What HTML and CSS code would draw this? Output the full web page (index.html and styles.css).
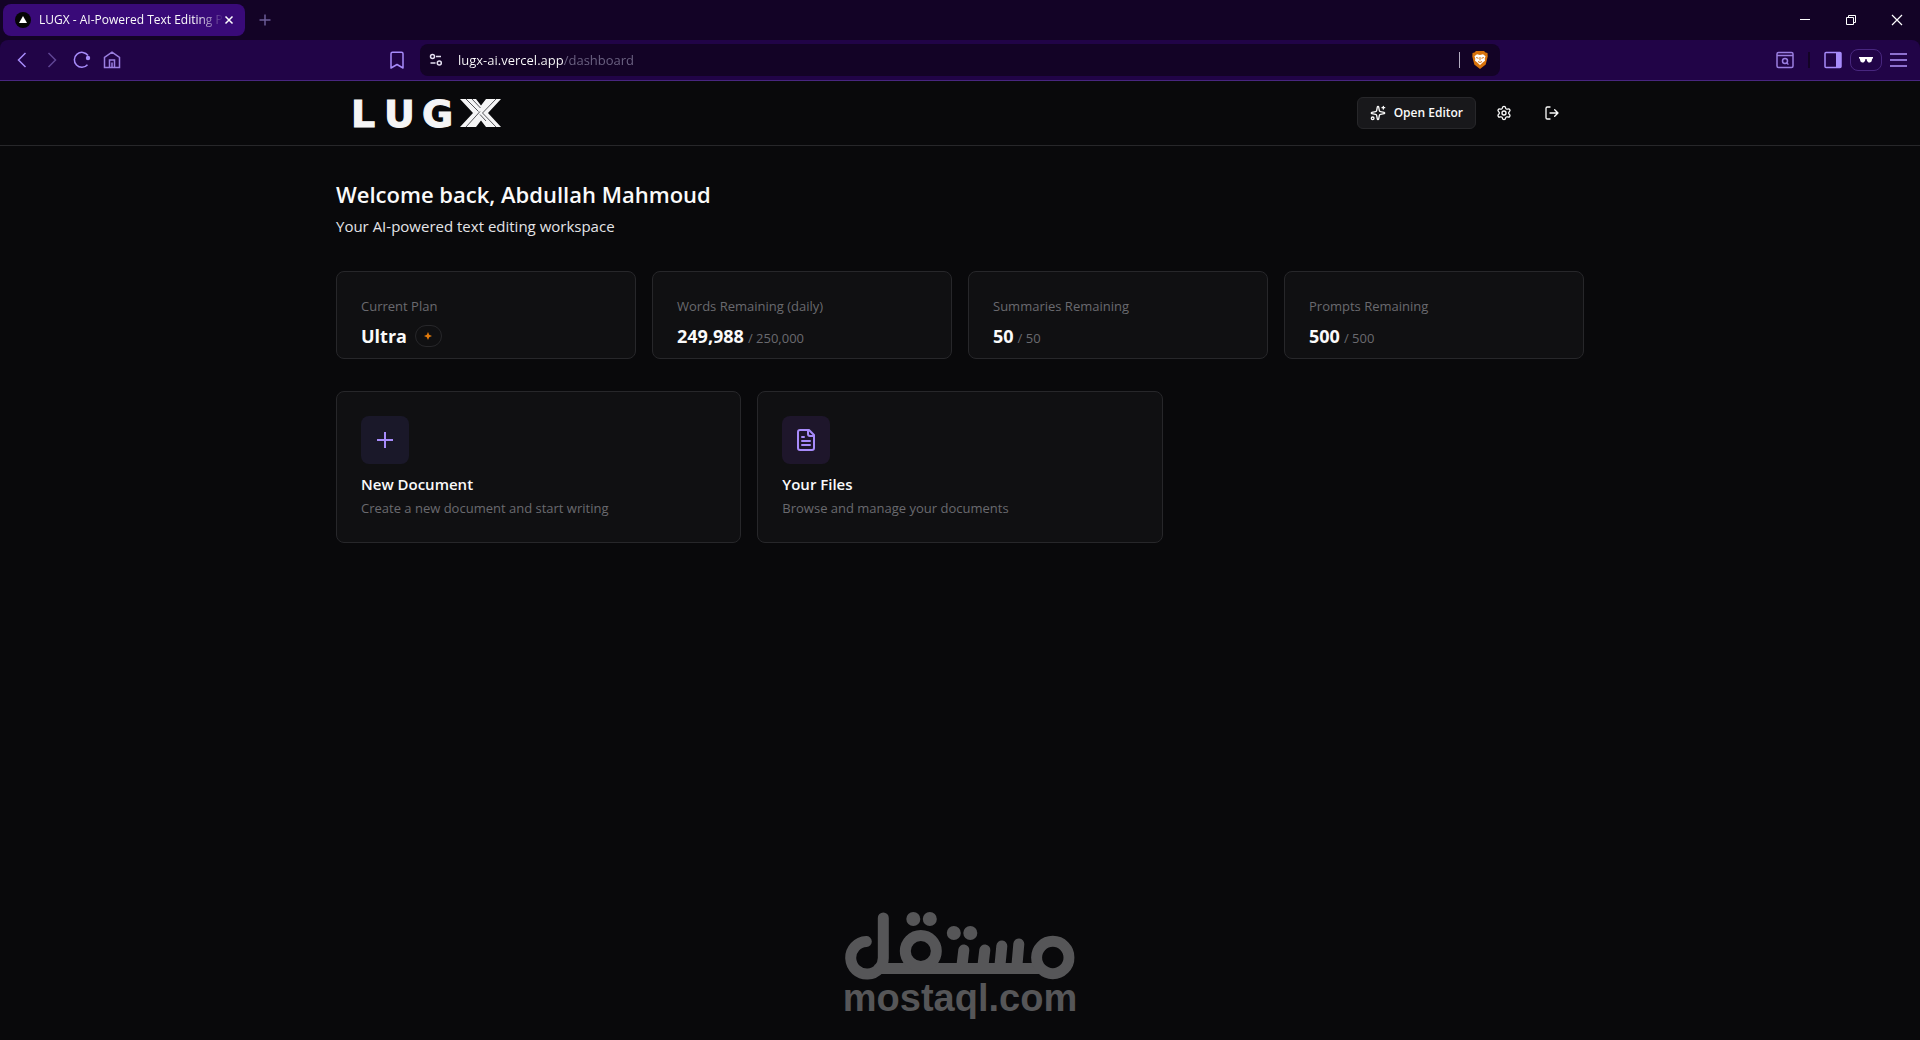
FILE: index.html
```html
<!DOCTYPE html>
<html lang="en">
<head>
<meta charset="utf-8">
<meta name="viewport" content="width=device-width, initial-scale=1">
<title>LUGX - AI-Powered Text Editing Platform</title>
<link rel="stylesheet" href="styles.css">
</head>
<body>
<div class="browser">
  <div class="titlebar">
    <div class="tab">
      <svg class="favicon" viewBox="0 0 16 16" aria-hidden="true"><circle cx="8" cy="8" r="8" fill="#050505"/><path d="M8 4l4 7H4z" fill="#fff"/></svg>
      <span class="tab-title">LUGX - AI-Powered Text Editing P</span>
      <button class="plain" aria-label="Close tab"><svg width="10" height="10" viewBox="0 0 10 10" fill="none" stroke="#fff" stroke-width="1.500"><path d="M1.500 1.500l7 7M8.500 1.500l-7 7"/></svg></button>
    </div>
    <button class="plain new-tab" aria-label="New tab"><svg width="12" height="12" viewBox="0 0 12 12" fill="none" stroke="#6b5c96" stroke-width="1.500"><path d="M6 .5v11M.5 6h11"/></svg></button>
    <div class="window-buttons">
      <button class="plain" aria-label="Minimize"><svg width="12" height="12" viewBox="0 0 12 12" fill="none" stroke="#fff"><path d="M1 5.500h10"/></svg></button>
      <button class="plain" aria-label="Restore"><svg width="12" height="12" viewBox="0 0 12 12" fill="none" stroke="#fff"><path d="M1.500 3.500h7v7h-7zM3.500 3.500v-2h7v7h-2"/></svg></button>
      <button class="plain" aria-label="Close"><svg width="12" height="12" viewBox="0 0 12 12" fill="none" stroke="#fff" stroke-width="1.200"><path d="M1 1l10 10M11 1L1 11"/></svg></button>
    </div>
  </div>
  <div class="toolbar">
    <div class="nav">
      <button class="plain" aria-label="Back"><svg width="18" height="18" viewBox="0 0 18 18" fill="none" stroke="#a78bfa" stroke-width="1.500"><path d="M12.500 2L5.500 9l7 7"/></svg></button>
      <button class="plain" aria-label="Forward"><svg width="18" height="18" viewBox="0 0 18 18" fill="none" stroke="#5f4594" stroke-width="1.500"><path d="M5.500 2l7 7-7 7"/></svg></button>
      <button class="plain" aria-label="Reload"><svg width="18" height="18" viewBox="0 0 18 18" fill="none" stroke="#a78bfa" stroke-width="1.500"><path d="M14.500 13.800A7.500 7.500 0 1 1 15 4.500"/><circle cx="15" cy="7" r="2.200" fill="#a78bfa" stroke="none"/></svg></button>
      <button class="plain" aria-label="Home"><svg width="18" height="18" viewBox="0 0 18 18" fill="none" stroke="#9a7ee0" stroke-width="1.500"><path d="M1.500 16.500v-10L9 1.200l7.500 5.300v10zM6.500 16.500V9h5v7.500M9 11.500v5"/></svg></button>
      <button class="plain bookmark" aria-label="Bookmark this page"><svg width="18" height="18" viewBox="0 0 18 18" fill="none" stroke="#a78bfa" stroke-width="1.500" stroke-linejoin="round"><path d="M4.500 1.200h9q1.500 0 1.500 1.500V17l-6-3.500L3 17V2.700q0-1.500 1.500-1.500z"/></svg></button>
    </div>
    <div class="address">
      <svg width="14" height="14" viewBox="0 0 14 14" fill="none" stroke="#e4dff0" stroke-width="1.500" aria-hidden="true"><circle cx="3.500" cy="3.500" r="2"/><path d="M7 3.500h5M1.500 10h5"/><circle cx="10.300" cy="10" r="2"/></svg>
      <input class="url" type="text" aria-label="Address" value="lugx-ai.vercel.app/dashboard" spellcheck="false">
      <span class="address-divider"></span>
      <button class="plain" aria-label="Brave Shields"><svg width="16" height="18" viewBox="0 0 16 18"><path d="M4 0h8l1.500 1.500L15.500 2l.2 3.500-2 8L8 18l-5.700-4.500-2-8L.5 2l2-.5z" fill="#d9730b"/><path d="M5 3.200L8 4l3-.8 2.500 2-.8 2.500.3 2L11 11.200 8 14l-3-2.800-2-1.500.3-2-.8-2.500z" fill="#fff"/><path d="M4.200 6.500l2.300.8M11.800 6.500l-2.300.8M8 6v3.300M6 10.500l2 1 2-1" fill="none" stroke="#d9730b"/></svg></button>
    </div>
    <div class="tools">
      <button class="plain" aria-label="Search tabs"><svg width="18" height="18" viewBox="0 0 18 18" fill="none" stroke="#9a7ee0" stroke-width="1.500"><rect x="1" y="1.500" width="16" height="15" rx="1.500"/><path d="M1 4.500h16M10.500 12l2 1.500"/><circle cx="9" cy="10" r="2.500"/></svg></button>
      <span class="tool-divider"></span>
      <button class="plain" aria-label="Sidebar"><svg width="18" height="18" viewBox="0 0 18 18" fill="none" stroke="#a78bfa" stroke-width="1.500"><rect x="1" y="1.500" width="16" height="15" rx="1"/><path d="M12 1.500h5v15h-5z" fill="#a78bfa" stroke="none"/></svg></button>
      <button class="plain private" aria-label="Private profile"><svg width="14" height="6" viewBox="0 0 14 6"><path d="M0 0h14v1.500h-.7L12.500 4.500 11 5.500H9.500L8 4l-.5-2h-1L6 4 4.500 5.500H3L1.500 4.500.7 1.500H0z" fill="#fff"/></svg></button>
      <button class="plain" aria-label="Menu"><svg width="17" height="16" viewBox="0 0 17 16" fill="none" stroke="#8d70cf" stroke-width="2"><path d="M0 2h17M0 8h17M0 14h17"/></svg></button>
    </div>
  </div>
</div>

<header class="site-header">
  <div class="container header-row">
    <a class="logo" href="#" aria-label="LUGX home">
      <svg width="152" height="48" viewBox="0 -8 152 48">
        <text class="logo-text" x="-1 32 70" y="30">LUG</text>
        <path d="M108 2h16l5 6.500L134 2h15l-13 14 13 14h-15l-5-6.500-5 6.500h-16l13-14z" fill="#f5f5f6"/>
        <path d="M114 2l12.500 12.500M120 2l8.500 9M144 2l-13.500 14L144 30M114 30l14-15.500M134 24l-6-6.500" fill="none" stroke="#55555a"/>
      </svg>
    </a>
    <nav class="header-actions" aria-label="Account">
      <button class="open-editor">
        <svg width="16" height="16" viewBox="0 0 24 24" fill="none" stroke="currentColor" stroke-width="2" stroke-linecap="round" stroke-linejoin="round" aria-hidden="true"><path d="M11.017 2.814a1 1 0 0 1 1.966 0l1.051 5.558a2 2 0 0 0 1.594 1.594l5.558 1.051a1 1 0 0 1 0 1.966l-5.558 1.051a2 2 0 0 0-1.594 1.594l-1.051 5.558a1 1 0 0 1-1.966 0l-1.051-5.558a2 2 0 0 0-1.594-1.594l-5.558-1.051a1 1 0 0 1 0-1.966l5.558-1.051a2 2 0 0 0 1.594-1.594zM20 2v4M22 4h-4"/><circle cx="4" cy="20" r="2"/></svg>
        Open Editor
      </button>
      <button class="icon-button" aria-label="Settings"><svg width="16" height="16" viewBox="0 0 24 24" fill="none" stroke="currentColor" stroke-width="2" stroke-linecap="round" stroke-linejoin="round"><path d="M9.671 4.136a2.340 2.340 0 0 1 4.659 0 2.340 2.340 0 0 0 3.319 1.915 2.340 2.340 0 0 1 2.330 4.033 2.340 2.340 0 0 0 0 3.831 2.340 2.340 0 0 1-2.330 4.033 2.340 2.340 0 0 0-3.319 1.915 2.340 2.340 0 0 1-4.659 0 2.340 2.340 0 0 0-3.320-1.915 2.340 2.340 0 0 1-2.330-4.033 2.340 2.340 0 0 0 0-3.831A2.340 2.340 0 0 1 6.350 6.051a2.340 2.340 0 0 0 3.319-1.915"/><circle cx="12" cy="12" r="3"/></svg></button>
      <button class="icon-button" aria-label="Sign out"><svg width="16" height="16" viewBox="0 0 24 24" fill="none" stroke="currentColor" stroke-width="2" stroke-linecap="round" stroke-linejoin="round"><path d="M9 21H5a2 2 0 0 1-2-2V5a2 2 0 0 1 2-2h4M16 17l5-5-5-5M21 12H9"/></svg></button>
    </nav>
  </div>
</header>

<main class="container main">
  <div class="welcome">
    <h1>Welcome back, Abdullah Mahmoud</h1>
    <p>Your AI-powered text editing workspace</p>
  </div>
  <section class="stats" aria-label="Usage">
    <div class="card stat"><p class="label">Current Plan</p><p class="value">Ultra <span class="badge"><svg width="8" height="8" viewBox="0 0 8 8" aria-hidden="true"><path d="M4 0l1.200 2.800L8 4 5.200 5.200 4 8 2.800 5.200 0 4l2.800-1.200z" fill="#e17a0c"/></svg></span></p></div>
    <div class="card stat"><p class="label">Words Remaining (daily)</p><p class="value">249,988 <small>/ 250,000</small></p></div>
    <div class="card stat"><p class="label">Summaries Remaining</p><p class="value">50 <small>/ 50</small></p></div>
    <div class="card stat"><p class="label">Prompts Remaining</p><p class="value">500 <small>/ 500</small></p></div>
  </section>
  <section class="actions" aria-label="Quick actions">
    <a class="card action" href="#">
      <span class="tile tile-new"><svg width="24" height="24" viewBox="0 0 24 24" fill="none" stroke="#a78bfa" stroke-width="2" aria-hidden="true"><path d="M4 12h16M12 4v16"/></svg></span>
      <h2>New Document</h2>
      <p>Create a new document and start writing</p>
    </a>
    <a class="card action" href="#">
      <span class="tile tile-files"><svg width="24" height="24" viewBox="0 0 24 24" fill="none" stroke="#a78bfa" stroke-width="2" stroke-linecap="round" stroke-linejoin="round" aria-hidden="true"><path d="M15 2H6a2 2 0 0 0-2 2v16a2 2 0 0 0 2 2h12a2 2 0 0 0 2-2V7zM14 2v4a2 2 0 0 0 2 2h4M10 9H8M16 13H8M16 17H8"/></svg></span>
      <h2>Your Files</h2>
      <p>Browse and manage your documents</p>
    </a>
  </section>
</main>

<div class="watermark">
  <svg width="230" height="68" viewBox="0 0 230 68" fill="none" stroke="#565658" stroke-width="11" stroke-linecap="round" aria-label="مستقل" role="img">
    <path d="M21.500 29.500A16.300 16.300 0 1 0 38.500 45V6M34 56.500h160M117 55l2-17M138 55l2-17M155 55l2-21M172 55l2-23"/>
    <circle cx="76" cy="39" r="15.500"/><circle cx="208" cy="45.500" r="16.200"/>
    <g fill="#565658" stroke="none"><circle cx="68.500" cy="7" r="7"/><circle cx="85" cy="7" r="7"/><circle cx="109" cy="21" r="7"/><circle cx="125.500" cy="21" r="7"/></g>
  </svg>
  <span class="watermark-domain">mostaql.com</span>
</div>
</body>
</html>
```
FILE: styles.css
```css
* { box-sizing: border-box; margin: 0; padding: 0; }

body {
  position: relative;
  min-height: 100vh;
  background: #09090b;
  color: #fafafa;
  font-family: "Segoe UI", "Open Sans", "Noto Sans", sans-serif;
  font-size: 14px;
  line-height: 20px;
}

button, input { font: inherit; color: inherit; }
button { cursor: pointer; }
a { color: inherit; text-decoration: none; }
svg { display: block; flex: none; }

.plain {
  display: flex;
  align-items: center;
  justify-content: center;
  background: none;
  border: 0;
}

/* Browser window */
.browser { background: #130326; }

.titlebar { display: flex; align-items: center; height: 40px; padding-left: 3px; }

.tab {
  display: flex;
  align-items: center;
  width: 242px;
  height: 32px;
  padding: 0 11px 0 12px;
  border-radius: 8px;
  background: #390a78;
  font-size: 12px;
}
.favicon { width: 16px; height: 16px; margin-right: 8px; }
.tab-title {
  flex: 1;
  white-space: nowrap;
  -webkit-mask-image: linear-gradient(90deg, #000 85%, transparent);
  mask-image: linear-gradient(90deg, #000 85%, transparent);
}
.new-tab { width: 40px; height: 32px; }
.window-buttons { display: flex; height: 40px; margin-left: auto; }
.window-buttons .plain { width: 46px; }

.toolbar {
  display: grid;
  grid-template-columns: minmax(160px, 1fr) minmax(0, 1080px) minmax(160px, 1fr);
  align-items: center;
  height: 41px;
  border-bottom: 1px solid #48267f;
  border-radius: 8px 8px 0 0;
  background: #210447;
}
.nav { display: flex; padding: 0 8px 0 7px; }
.nav .plain { width: 30px; height: 32px; }
.nav .bookmark { margin-left: auto; }

.address {
  display: flex;
  align-items: center;
  gap: 12px;
  height: 32px;
  padding: 0 12px 0 9px;
  border-radius: 8px;
  background: #130326;
}
.url {
  flex: 1;
  min-width: 0;
  margin-left: 3px;
  border: 0;
  outline: 0;
  font-size: 13px;
  color: transparent;
  background: linear-gradient(90deg, #fff 106px, #6d6484 106px) text;
}
.address-divider { width: 1px; height: 16px; background: #b3adc0; }

.tools { display: flex; align-items: center; justify-content: flex-end; gap: 8px; padding-right: 13px; }
.tool-divider { width: 2px; height: 16px; margin: 0 6px; background: #130326; }
.private { width: 32px; height: 22px; border: 1px solid #48267f; border-radius: 8px; }

/* Dashboard */
.container { width: 100%; max-width: 1280px; margin: 0 auto; padding: 0 16px; }

.site-header { border-bottom: 1px solid #27272a; }
.header-row { display: flex; align-items: center; justify-content: space-between; height: 64px; }
.logo { padding-left: 16px; }
.logo svg { overflow: visible; }
.logo-text { fill: #f5f5f6; stroke: #f5f5f6; font: bold 38px "DejaVu Sans", sans-serif; }

.header-actions { display: flex; align-items: center; gap: 8px; padding-right: 12px; }
.open-editor {
  display: flex;
  align-items: center;
  gap: 8px;
  height: 32px;
  padding: 0 12px;
  border: 1px solid #27272a;
  border-radius: 6px;
  background: #18181b;
  font-size: 12px;
  font-weight: 600;
}
.icon-button {
  display: flex;
  align-items: center;
  justify-content: center;
  width: 40px;
  height: 32px;
  border: 0;
  background: none;
}

.main { padding-top: 32px; padding-bottom: 32px; }
.welcome { margin-bottom: 33px; }
h1 { margin-bottom: 4px; font-size: 22px; font-weight: 600; line-height: 32px; }
.welcome p { font-size: 15px; line-height: 24px; color: #e4e4e7; }

.card { border: 1px solid #27272a; border-radius: 8px; background: #101012; }
.stats { display: grid; grid-template-columns: repeat(4, 1fr); gap: 16px; margin-bottom: 32px; }
.stat { padding: 24px 24px 8px; }
.label { margin-bottom: 6px; font-size: 13px; color: #6a6a6f; }
.value { display: flex; align-items: baseline; gap: 4px; font-size: 18px; font-weight: 700; line-height: 28px; }
.value small { font-size: 13px; font-weight: 400; line-height: 20px; color: #6a6a6f; }
.badge {
  display: flex;
  align-items: center;
  justify-content: center;
  align-self: center;
  width: 27px;
  height: 22px;
  margin-left: 4px;
  border: 1px solid #27272a;
  border-radius: 11px;
}

.actions { display: grid; grid-template-columns: repeat(3, 1fr); gap: 16px; }
.action { padding: 24px; }
.tile {
  display: flex;
  align-items: center;
  justify-content: center;
  width: 48px;
  height: 48px;
  margin-bottom: 8px;
  border-radius: 8px;
}
.tile-new { background: #1a1829; }
.tile-files { background: #1e162b; }
h2 { margin-bottom: 2px; font-size: 15px; font-weight: 600; line-height: 24px; }
.action p { font-size: 13px; color: #6a6a6f; }

/* Watermark laid over the page */
.watermark {
  position: absolute;
  bottom: 24px;
  left: 50%;
  display: flex;
  flex-direction: column;
  align-items: center;
  transform: translateX(-50%);
  pointer-events: none;
}
.watermark-domain {
  color: #565658;
  font: bold 38px/36px "Liberation Sans", Arial, sans-serif;
}
```
